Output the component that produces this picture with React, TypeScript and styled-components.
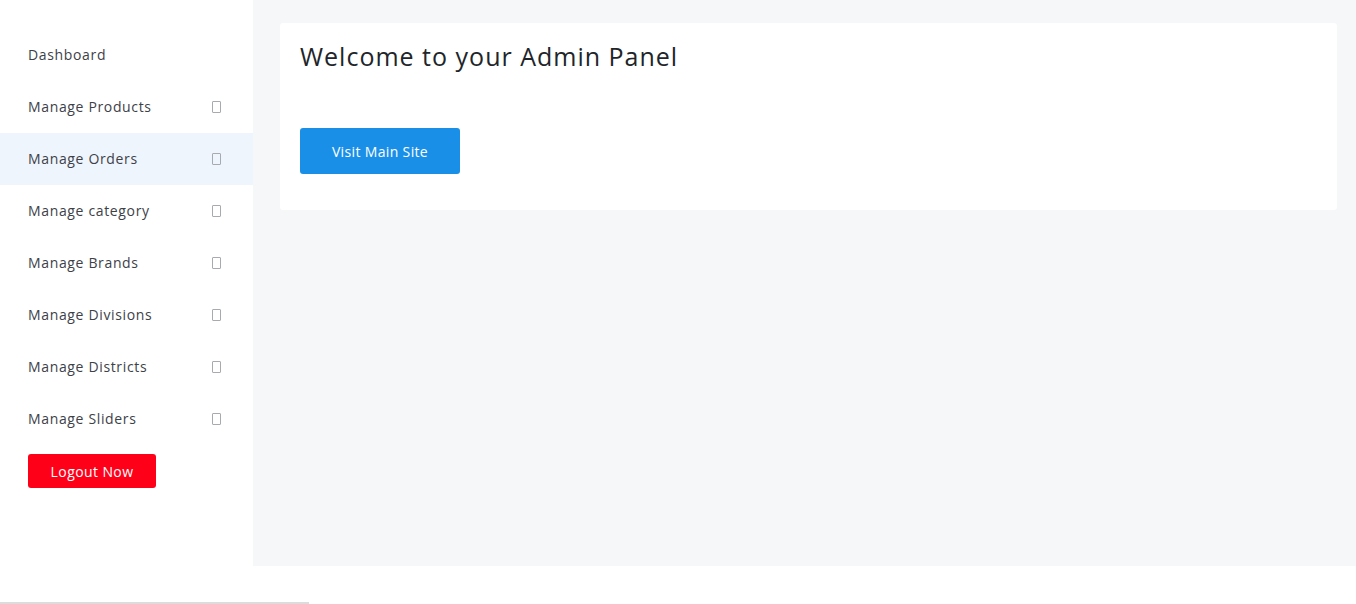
import styled, { createGlobalStyle } from "styled-components";

const GlobalStyle = createGlobalStyle`
  body {
    margin: 0;
    background: #ffffff;
    font-family: "Open Sans", "Liberation Sans", sans-serif;
  }
  * {
    box-sizing: border-box;
  }
`;

interface MenuItem {
  name: string;
  hasIcon: boolean;
  active?: boolean;
}

const menu: MenuItem[] = [
  { name: "Dashboard", hasIcon: false },
  { name: "Manage Products", hasIcon: true },
  { name: "Manage Orders", hasIcon: true, active: true },
  { name: "Manage category", hasIcon: true },
  { name: "Manage Brands", hasIcon: true },
  { name: "Manage Divisions", hasIcon: true },
  { name: "Manage Districts", hasIcon: true },
  { name: "Manage Sliders", hasIcon: true },
];

export default function App() {
  return (
    <>
      <GlobalStyle />
      <Layout>
        <Sidebar>
          <MenuList>
            {menu.map((item) => (
              <MenuRow key={item.name} active={!!item.active}>
                <MenuLabel>{item.name}</MenuLabel>
                {item.hasIcon && <MissingGlyph />}
              </MenuRow>
            ))}
          </MenuList>
          <LogoutButton>Logout Now</LogoutButton>
        </Sidebar>
        <Main>
          <Card>
            <Title>Welcome to your Admin Panel</Title>
            <VisitButton>Visit Main Site</VisitButton>
          </Card>
        </Main>
      </Layout>
      <Footer>
        <ScrollTrack />
      </Footer>
    </>
  );
}

const Layout = styled.div`
  display: flex;
  height: 566px;
`;

const Sidebar = styled.aside`
  width: 253px;
  flex-shrink: 0;
  padding-top: 29px;
  background: #ffffff;
`;

const MenuList = styled.ul`
  list-style: none;
  margin: 0;
  padding: 0;
`;

const MenuRow = styled.li<{ active: boolean }>`
  display: flex;
  align-items: center;
  justify-content: space-between;
  height: 52px;
  padding: 0 32px 2px 28px;
  background: ${({ active }) => (active ? "#eff5fd" : "transparent")};
`;

const MenuLabel = styled.span`
  font-size: 14px;
  color: #3d4148;
  letter-spacing: 0.65px;
`;

const MissingGlyph = styled.span`
  width: 9px;
  height: 12px;
  margin-top: 2px;
  border: 1px solid #a9aab0;
  border-radius: 1px;
`;

const LogoutButton = styled.button`
  margin: 9px 0 0 28px;
  width: 128px;
  height: 34px;
  border: none;
  border-radius: 3px;
  background: #ff0019;
  color: #ffffff;
  font-family: inherit;
  font-size: 14px;
  letter-spacing: 0.4px;
  cursor: pointer;
`;

const Main = styled.main`
  flex: 1;
  background: #f6f7f9;
  padding: 23px 19px 0 27px;
`;

const Card = styled.section`
  background: #ffffff;
  border-radius: 3px;
  height: 187px;
  padding: 16px 20px 0 20px;
`;

const Title = styled.h1`
  margin: 0 0 55px 0;
  height: 34px;
  line-height: 34px;
  font-size: 25px;
  font-weight: 400;
  color: #212529;
  letter-spacing: 1px;
`;

const VisitButton = styled.button`
  width: 160px;
  height: 46px;
  border: none;
  border-radius: 3px;
  background: #1a8fe8;
  color: #ffffff;
  font-family: inherit;
  font-size: 14px;
  font-weight: 500;
  letter-spacing: 0.35px;
  cursor: pointer;
`;

const Footer = styled.footer`
  height: 38px;
  display: flex;
  align-items: flex-end;
`;

const ScrollTrack = styled.div`
  width: 309px;
  height: 2px;
  background: #dcdcdc;
`;
